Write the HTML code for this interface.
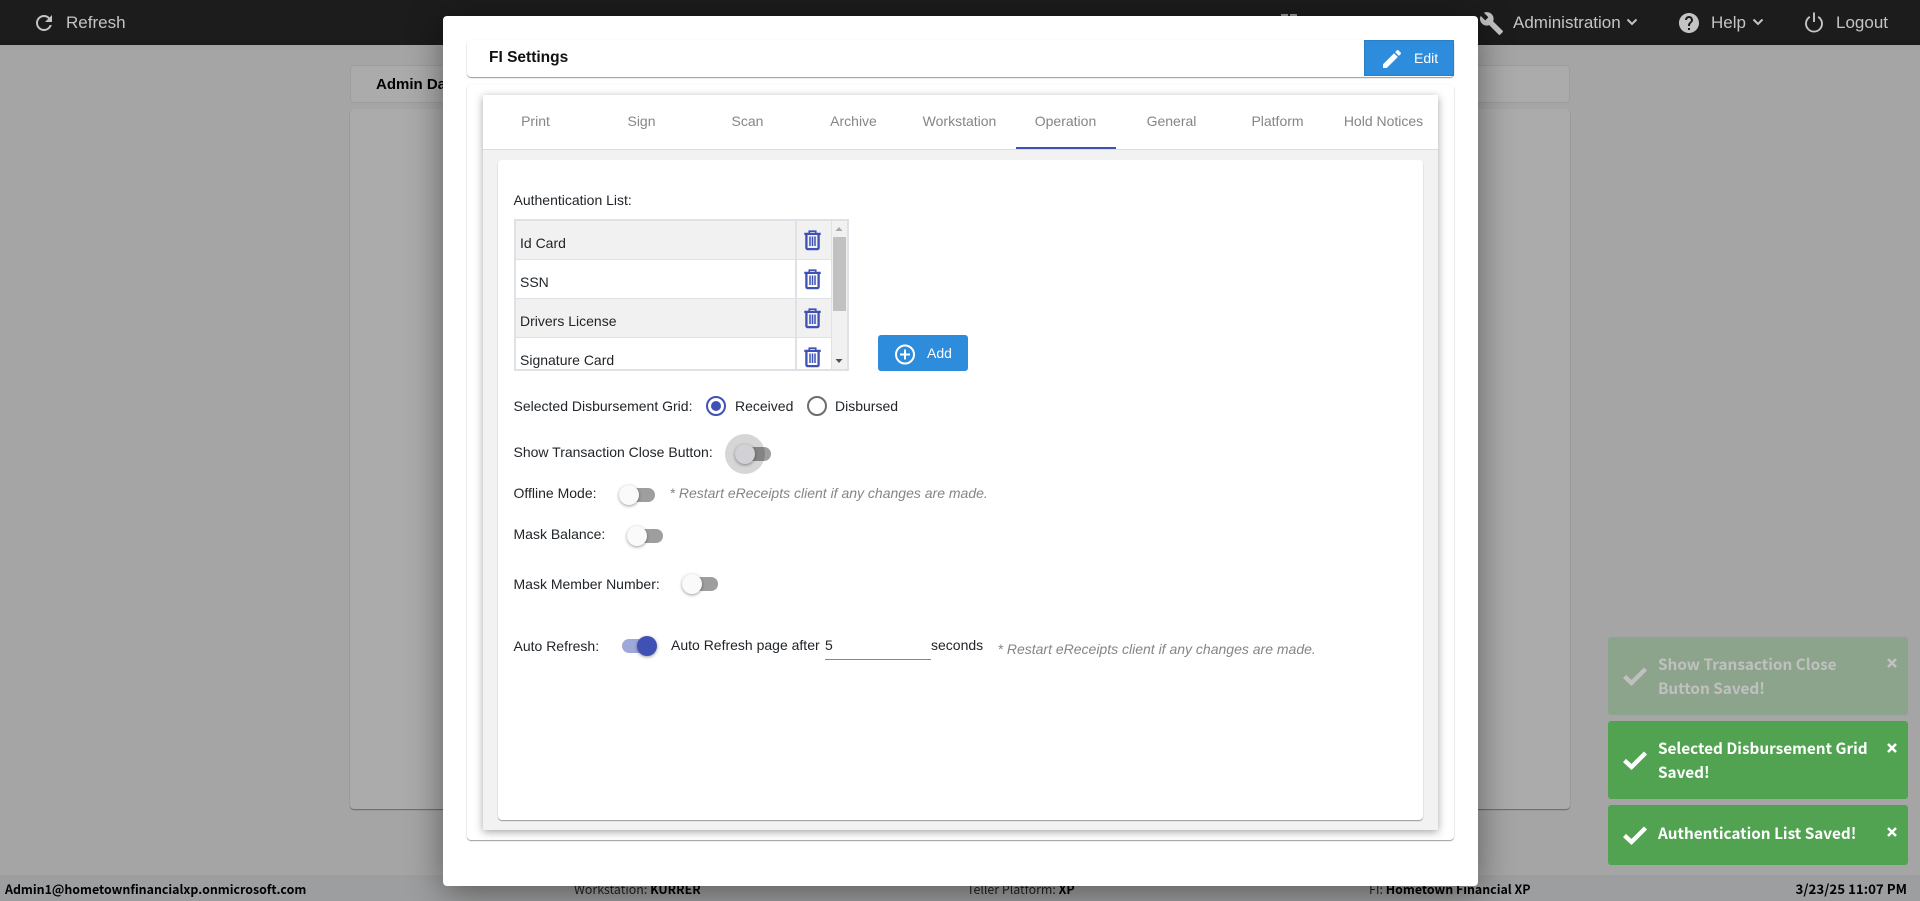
<!DOCTYPE html>
<html lang="en"><head><meta charset="utf-8"><title>FI Settings</title>
<style>
html,body{margin:0;padding:0;width:1920px;height:901px;overflow:hidden;background:#a5a5a5;font-family:"Liberation Sans",Arial,sans-serif;font-size:14px;color:#212529}
.a{position:absolute}
.t{position:absolute;white-space:nowrap;line-height:20px;height:20px}
svg{position:absolute;overflow:visible}
.nav{color:#c4c4c4;font-size:17px}
.foot{font-family:"Noto Sans CJK JP","Liberation Sans",sans-serif;font-size:12.4px;color:#000;font-weight:700;line-height:20px}
.foot i{font-style:normal;font-weight:400;color:#222}
.tab{position:absolute;top:111px;width:106px;text-align:center;color:#858585;line-height:20px;white-space:nowrap}
.sw-track{position:absolute;height:14px;width:34px;border-radius:7px;background:#9e9e9e}
.sw-thumb{position:absolute;width:20px;height:20px;border-radius:50%;background:#fafafa;box-shadow:0 1px 3px rgba(0,0,0,.4)}
.note{color:#858585;font-style:italic}
.toast{position:absolute;left:1608px;width:300px;background:#51a351;border-radius:3px;color:#fff}
.toast .m{position:absolute;left:50px;font-family:"Noto Sans CJK JP","Liberation Sans",sans-serif;font-weight:700;font-size:15.3px;line-height:24px;white-space:nowrap}
</style></head><body>

<!-- base page -->
<div class="a" style="left:0;top:0;width:1920px;height:45px;background:#1c1c1c"></div>
<svg style="left:32px;top:11px" width="24" height="24" viewBox="0 0 24 24"><path fill="#c4c4c4" d="M17.65 6.35C16.2 4.9 14.21 4 12 4c-4.42 0-7.99 3.58-7.99 8s3.57 8 7.99 8c3.73 0 6.84-2.55 7.73-6h-2.08c-.82 2.33-3.04 4-5.65 4-3.31 0-6-2.69-6-6s2.69-6 6-6c1.66 0 3.14.69 4.22 1.78L13 11h7V4l-2.35 2.35z"/></svg>
<div class="t nav" style="left:66px;top:13px">Refresh</div>
<div class="a" style="left:1281px;top:14px;width:7px;height:3px;background:#999"></div>
<div class="a" style="left:1290px;top:14px;width:7px;height:3px;background:#999"></div>
<svg style="left:1479px;top:11px" width="25" height="25" viewBox="0 0 24 24"><path fill="#c4c4c4" d="M22.7 19l-9.1-9.1c.9-2.3.4-5-1.5-6.9-2-2-5-2.4-7.4-1.3L9 6 6 9 1.6 4.7C.4 7.1.9 10.1 2.9 12.1c1.9 1.9 4.6 2.4 6.9 1.5l9.1 9.1c.4.4 1 .4 1.4 0l2.3-2.3c.5-.4.5-1.1.1-1.4z"/></svg>
<div class="t nav" style="left:1513px;top:13px">Administration</div>
<svg style="left:1626px;top:18px" width="12" height="8" viewBox="0 0 12 8"><path d="M1.5 1.5 6 6l4.5-4.5" fill="none" stroke="#c4c4c4" stroke-width="2"/></svg>
<svg style="left:1677px;top:11px" width="24" height="24" viewBox="0 0 24 24"><path fill="#c4c4c4" d="M12 2C6.48 2 2 6.48 2 12s4.48 10 10 10 10-4.48 10-10S17.52 2 12 2zm1 17h-2v-2h2v2zm2.07-7.75l-.9.92C13.45 12.9 13 13.5 13 15h-2v-.5c0-1.1.45-2.1 1.17-2.83l1.24-1.26c.37-.36.59-.86.59-1.41 0-1.1-.9-2-2-2s-2 .9-2 2H8c0-2.21 1.79-4 4-4s4 1.79 4 4c0 .88-.36 1.68-.93 2.25z"/></svg>
<div class="t nav" style="left:1711px;top:13px">Help</div>
<svg style="left:1752px;top:18px" width="12" height="8" viewBox="0 0 12 8"><path d="M1.5 1.5 6 6l4.5-4.5" fill="none" stroke="#c4c4c4" stroke-width="2"/></svg>
<svg style="left:1803px;top:11px" width="22" height="22" viewBox="0 0 22 22"><path d="M6.8 5.8a8 8 0 1 0 8.4 0M11 1.5v9.5" fill="none" stroke="#c4c4c4" stroke-width="1.9"/></svg>
<div class="t nav" style="left:1836px;top:13px">Logout</div>

<div class="a" style="left:350px;top:65px;width:1220px;height:38px;background:#ababab;border:1px solid #9c9c9c;border-radius:4px;box-sizing:border-box"></div>
<div class="t" style="left:376px;top:75px;font-weight:700;color:#000;font-size:15px">Admin Dashboard</div>
<div class="a" style="left:350px;top:109px;width:1220px;height:700px;background:#ababab;border-radius:4px;box-shadow:0 1px 1px rgba(0,0,0,.38)"></div>

<div class="a" style="left:0;top:875px;width:1920px;height:26px;background:#9d9e9f"></div>
<div class="t foot" style="left:5px;top:879px">Admin1@hometownfinancialxp.onmicrosoft.com</div>
<div class="t foot" style="left:574px;top:879px"><i>Workstation:</i> KURRER</div>
<div class="t foot" style="left:967px;top:879px"><i>Teller Platform:</i> XP</div>
<div class="t foot" style="left:1369px;top:879px"><i>FI:</i> Hometown Financial XP</div>
<div class="t foot" style="right:13px;top:879px;font-size:13.3px">3/23/25 11:07 PM</div>

<!-- toasts -->
<div class="toast" style="top:637px;height:78px;opacity:.3">
  <svg style="left:14px;top:29px" width="26" height="20" viewBox="0 0 26 20"><path d="M2.5 10.5 9.5 17 23.5 3" fill="none" stroke="#fff" stroke-width="4.4"/></svg>
  <div class="m" style="top:15px">Show Transaction Close<br>Button Saved!</div>
  <svg style="left:279px;top:21px" width="10" height="10" viewBox="0 0 10 10"><path d="M1 1l8 8M9 1 1 9" stroke="#fff" stroke-width="2.6"/></svg>
</div>
<div class="toast" style="top:721px;height:78px">
  <svg style="left:14px;top:29px" width="26" height="20" viewBox="0 0 26 20"><path d="M2.5 10.5 9.5 17 23.5 3" fill="none" stroke="#fff" stroke-width="4.4"/></svg>
  <div class="m" style="top:15px">Selected Disbursement Grid<br>Saved!</div>
  <svg style="left:279px;top:22px" width="10" height="10" viewBox="0 0 10 10"><path d="M1 1l8 8M9 1 1 9" stroke="#fff" stroke-width="2.6"/></svg>
</div>
<div class="toast" style="top:805px;height:60px">
  <svg style="left:14px;top:20px" width="26" height="20" viewBox="0 0 26 20"><path d="M2.5 10.5 9.5 17 23.5 3" fill="none" stroke="#fff" stroke-width="4.4"/></svg>
  <div class="m" style="top:16px">Authentication List Saved!</div>
  <svg style="left:279px;top:22px" width="10" height="10" viewBox="0 0 10 10"><path d="M1 1l8 8M9 1 1 9" stroke="#fff" stroke-width="2.6"/></svg>
</div>

<!-- modal -->
<div class="a" style="left:443px;top:16px;width:1035px;height:870px;background:#fff;border-radius:4px;box-shadow:0 6px 36px rgba(0,0,0,.45)"></div>

<div class="a" style="left:467px;top:40px;width:987px;height:37px;background:#fff;border-radius:4px;box-shadow:0 1px 1px rgba(0,0,0,.4),0 0 2px rgba(0,0,0,.04)"></div>
<div class="t" style="left:489px;top:48px;font-weight:700;color:#111;font-size:15.5px">FI Settings</div>
<div class="a" style="left:1364px;top:40px;width:90px;height:36px;background:#2d8cdc;border:1px solid #2a7fc7;box-sizing:border-box"></div>
<svg style="left:1380px;top:47px" width="24" height="24" viewBox="0 0 24 24"><path fill="#fff" d="M3 17.25V21h3.75L17.81 9.94l-3.75-3.75L3 17.25zM20.71 7.04c.39-.39.39-1.02 0-1.41l-2.34-2.34c-.39-.39-1.02-.39-1.41 0l-1.83 1.83 3.75 3.75 1.83-1.83z"/></svg>
<div class="t" style="left:1414px;top:48px;color:#fff">Edit</div>

<div class="a" style="left:467px;top:85px;width:987px;height:755px;background:#fff;border-radius:4px;box-shadow:0 1px 1px rgba(0,0,0,.38),0 0 2px rgba(0,0,0,.05)"></div>
<div class="a" style="left:483px;top:95px;width:955px;height:735px;background:#f2f2f2;box-shadow:0 2px 8px rgba(0,0,0,.36)"></div>
<div class="a" style="left:483px;top:95px;width:955px;height:54px;background:#fff;border-bottom:1.5px solid #dcdcdc"></div>
<div class="tab" style="left:482.5px">Print</div>
<div class="tab" style="left:588.5px">Sign</div>
<div class="tab" style="left:694.5px">Scan</div>
<div class="tab" style="left:800.5px">Archive</div>
<div class="tab" style="left:906.5px">Workstation</div>
<div class="tab" style="left:1012.5px">Operation</div>
<div class="tab" style="left:1118.5px">General</div>
<div class="tab" style="left:1224.5px">Platform</div>
<div class="tab" style="left:1330.5px">Hold Notices</div>
<div class="a" style="left:1016px;top:147px;width:100px;height:2px;background:#3f51b5"></div>

<div class="a" style="left:498px;top:160px;width:925px;height:660px;background:#fff;border-radius:4px;box-shadow:0 1px 1px rgba(0,0,0,.38)"></div>

<div class="t" style="left:513.5px;top:190px">Authentication List:</div>

<!-- list -->
<div class="a" style="left:514px;top:219px;width:335px;height:152px;border:2px solid #dee2e6;box-sizing:border-box;background:#fff;overflow:hidden">
  <div class="a" style="left:0;top:0;width:280px;height:39px;background:#f1f1f1;border-bottom:1.5px solid #dee2e6;box-sizing:border-box"></div>
  <div class="a" style="left:0;top:39px;width:280px;height:39px;background:#fff;border-bottom:1.5px solid #dee2e6;box-sizing:border-box"></div>
  <div class="a" style="left:0;top:78px;width:280px;height:39px;background:#f1f1f1;border-bottom:1.5px solid #dee2e6;box-sizing:border-box"></div>
  <div class="a" style="left:279px;top:0;width:1.5px;height:150px;background:#dee2e6"></div>
  <div class="a" style="left:280.5px;top:0;width:35px;height:39px;background:#f1f1f1;border-bottom:1.5px solid #dee2e6;box-sizing:border-box"></div>
  <div class="a" style="left:280.5px;top:39px;width:35px;height:39px;background:#fff;border-bottom:1.5px solid #dee2e6;box-sizing:border-box"></div>
  <div class="a" style="left:280.5px;top:78px;width:35px;height:39px;background:#f1f1f1;border-bottom:1.5px solid #dee2e6;box-sizing:border-box"></div>
  <div class="a" style="left:280.5px;top:117px;width:35px;height:33px;background:#fff"></div>
  <div class="a" style="left:314.5px;top:0;width:18px;height:150px;background:#f1f1f1;border-left:1.5px solid #dee2e6;box-sizing:border-box"></div>
  <div class="a" style="left:317px;top:16px;width:13px;height:74px;background:#c1c1c1"></div>
</div>
<div class="t" style="left:520px;top:233px">Id Card</div>
<div class="t" style="left:520px;top:272px">SSN</div>
<div class="t" style="left:520px;top:311px">Drivers License</div>
<div class="t" style="left:520px;top:350px">Signature Card</div>
<svg style="left:834px;top:226px" width="10" height="6" viewBox="0 0 10 6"><path d="M1.5 5 5 1l3.5 4z" fill="#a8a8a8"/></svg>
<svg style="left:834px;top:358px" width="10" height="6" viewBox="0 0 10 6"><path d="M1.5 1 5 5l3.5-4z" fill="#505050"/></svg>
<svg style="left:804px;top:230px" width="17" height="20" viewBox="0 0 17 20"><g fill="none" stroke="#3f51b5"><path d="M.3 3.9h16.4" stroke-width="2.2"/><path d="M5.3 3.5V1.2h6.4v2.3" stroke-width="1.7"/><path d="M2.4 3.5v14.2c0 .8.6 1.4 1.3 1.4h9.6c.7 0 1.3-.6 1.3-1.4V3.5" stroke-width="2.3"/><path d="M6 6.5v9.5M8.5 6.5v9.5M11 6.5v9.5" stroke-width="1.5"/></g></svg>
<svg style="left:804px;top:269px" width="17" height="20" viewBox="0 0 17 20"><g fill="none" stroke="#3f51b5"><path d="M.3 3.9h16.4" stroke-width="2.2"/><path d="M5.3 3.5V1.2h6.4v2.3" stroke-width="1.7"/><path d="M2.4 3.5v14.2c0 .8.6 1.4 1.3 1.4h9.6c.7 0 1.3-.6 1.3-1.4V3.5" stroke-width="2.3"/><path d="M6 6.5v9.5M8.5 6.5v9.5M11 6.5v9.5" stroke-width="1.5"/></g></svg>
<svg style="left:804px;top:308px" width="17" height="20" viewBox="0 0 17 20"><g fill="none" stroke="#3f51b5"><path d="M.3 3.9h16.4" stroke-width="2.2"/><path d="M5.3 3.5V1.2h6.4v2.3" stroke-width="1.7"/><path d="M2.4 3.5v14.2c0 .8.6 1.4 1.3 1.4h9.6c.7 0 1.3-.6 1.3-1.4V3.5" stroke-width="2.3"/><path d="M6 6.5v9.5M8.5 6.5v9.5M11 6.5v9.5" stroke-width="1.5"/></g></svg>
<svg style="left:804px;top:347px" width="17" height="20" viewBox="0 0 17 20"><g fill="none" stroke="#3f51b5"><path d="M.3 3.9h16.4" stroke-width="2.2"/><path d="M5.3 3.5V1.2h6.4v2.3" stroke-width="1.7"/><path d="M2.4 3.5v14.2c0 .8.6 1.4 1.3 1.4h9.6c.7 0 1.3-.6 1.3-1.4V3.5" stroke-width="2.3"/><path d="M6 6.5v9.5M8.5 6.5v9.5M11 6.5v9.5" stroke-width="1.5"/></g></svg>

<div class="a" style="left:878px;top:335px;width:90px;height:36px;background:#2d8cdc;border-radius:3px"></div>
<svg style="left:895px;top:344px" width="20" height="21" viewBox="0 0 20 21"><circle cx="10" cy="10.5" r="9" fill="none" stroke="#fff" stroke-width="2"/><path d="M10 5.5v10M5 10.5h10" stroke="#fff" stroke-width="2"/></svg>
<div class="t" style="left:927px;top:343px;color:#fff">Add</div>

<!-- radios -->
<div class="t" style="left:513.5px;top:396px">Selected Disbursement Grid:</div>
<svg style="left:706px;top:396px" width="20" height="20" viewBox="0 0 20 20"><circle cx="10" cy="10" r="9" fill="none" stroke="#3f51b5" stroke-width="2"/><circle cx="10" cy="10" r="5" fill="#3f51b5"/></svg>
<div class="t" style="left:735px;top:396px">Received</div>
<svg style="left:807px;top:396px" width="20" height="20" viewBox="0 0 20 20"><circle cx="10" cy="10" r="9" fill="none" stroke="#6d6d6d" stroke-width="2"/></svg>
<div class="t" style="left:835px;top:396px">Disbursed</div>

<!-- switches -->
<div class="t" style="left:513.5px;top:442px">Show Transaction Close Button:</div>
<div class="sw-track" style="left:737px;top:447px;background:#9e9e9e"></div>
<div class="a" style="left:725px;top:434px;width:40px;height:40px;border-radius:50%;background:rgba(0,0,0,.16)"></div>
<div class="sw-thumb" style="left:735px;top:444px;background:#d2d2d6"></div>

<div class="t" style="left:513.5px;top:483px">Offline Mode:</div>
<div class="sw-track" style="left:621px;top:488px"></div>
<div class="sw-thumb" style="left:619px;top:485px"></div>
<div class="t note" style="left:669.5px;top:483px">* Restart eReceipts client if any changes are made.</div>

<div class="t" style="left:513.5px;top:524px">Mask Balance:</div>
<div class="sw-track" style="left:629px;top:529px"></div>
<div class="sw-thumb" style="left:627px;top:526px"></div>

<div class="t" style="left:513.5px;top:574px">Mask Member Number:</div>
<div class="sw-track" style="left:684px;top:577px"></div>
<div class="sw-thumb" style="left:682px;top:574px"></div>

<div class="t" style="left:513.5px;top:636px">Auto Refresh:</div>
<div class="sw-track" style="left:621.5px;top:639px;background:#9fa8da"></div>
<div class="sw-thumb" style="left:637px;top:636px;background:#3f51b5"></div>
<div class="t" style="left:671px;top:635px">Auto Refresh page after</div>
<div class="t" style="left:825px;top:635px">5</div>
<div class="a" style="left:825px;top:659px;width:106px;height:1px;background:#888"></div>
<div class="t" style="left:931px;top:635px">seconds</div>
<div class="t note" style="left:997.5px;top:639px">* Restart eReceipts client if any changes are made.</div>

</body></html>
